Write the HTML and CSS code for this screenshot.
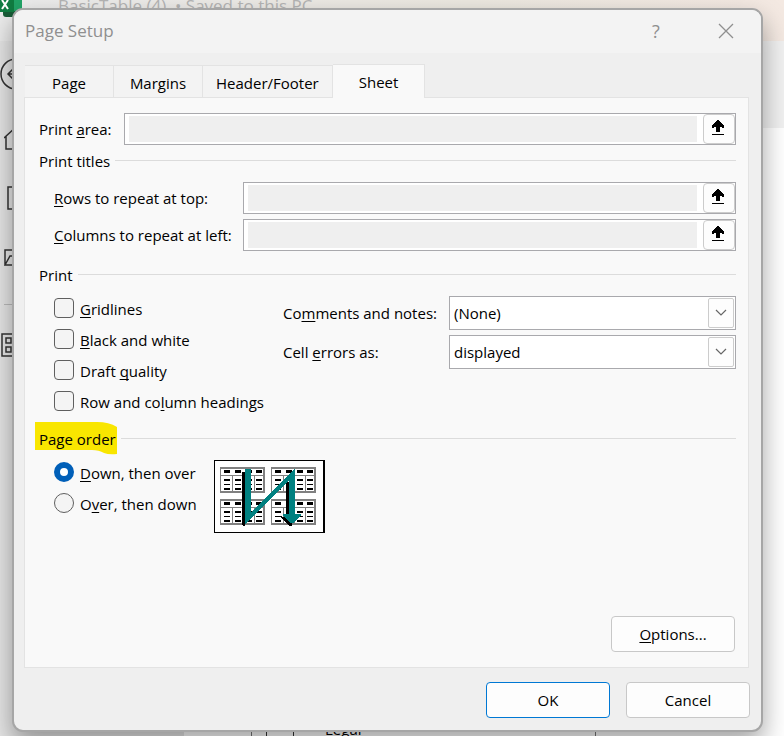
FILE: index.html
```html
<!DOCTYPE html>
<html lang="en">
<head>
    <meta charset="UTF-8">
    <meta name="viewport" content="width=device-width, initial-scale=1.0">
    <title>Page Setup</title>
    <link rel="stylesheet" href="styles.css">
</head>
<body>
    <!-- Excel window behind the dialog -->
    <div class="app">
        <header class="app-title">
            <svg class="logo" width="22" height="17" viewBox="0 0 22 17">
                <path d="M0 0h22v12H0z" fill="#21a366"/>
                <path d="M3 11h19v3q0 3-3 3H6q-3 0-3-3z" fill="#185c37"/>
                <path d="M0 0h14v12H0z" fill="#107c41"/>
                <path d="M2 0l6 9M8 0L2 9" stroke="#fff" stroke-width="2"/>
            </svg>
            <span>BasicTable (4) &nbsp;• Saved to this PC</span>
        </header>
        <div class="app-body">
            <nav class="sidebar">
                <svg class="back" width="32" height="32" viewBox="0 0 32 32"><circle cx="16" cy="16" r="15"/><path d="M24 16H8M14 10l-6 6 6 6"/></svg>
                <svg width="24" height="24" viewBox="0 0 24 24"><path d="M0 12L12 1l12 11M2 10v13h7v-8h6v8h7V10"/></svg>
                <svg width="24" height="24" viewBox="0 0 24 24"><path d="M4 1h10l6 6v16H4z"/></svg>
                <svg width="24" height="24" viewBox="0 0 24 24"><path d="M1 19V4h8l2 3h9v3M1 19l5-9h17l-4 9z"/></svg>
                <hr>
                <svg class="grid-icon" width="28" height="24" viewBox="0 0 28 24"><path d="M2 1h24v22H2zM6 5h5v5H6zM6 14h5v5H6zM16 5h5v5h-5zM16 14h5v5h-5z"/></svg>
            </nav>
            <main class="main">
                <div class="main-head"></div>
                <div class="list">
                    <div class="list-item"><span class="sheet-icon"></span>Legal</div>
                </div>
            </main>
        </div>
    </div>

    <!-- Page Setup dialog -->
    <form class="dialog">
        <div class="titlebar">
            <h1>Page Setup</h1>
            <button type="button" class="title-btn" aria-label="Help">?</button>
            <button type="button" class="title-btn" aria-label="Close">
                <svg width="16" height="16" viewBox="0 0 16 16"><path d="M1 1l14 14M15 1L1 15" stroke="#8f8f8f" stroke-width="1.3"/></svg>
            </button>
        </div>

        <div class="content">
            <div class="tabs">
                <button type="button" class="tab">Page</button>
                <button type="button" class="tab">Margins</button>
                <button type="button" class="tab">Header/Footer</button>
                <button type="button" class="tab active">Sheet</button>
            </div>

            <div class="panel">
                <div class="field">
                    <label class="area-label" for="area">Print <u>a</u>rea:</label>
                    <div class="range">
                        <input type="text" id="area">
                        <button type="button" class="pick" aria-label="Select print area"><svg width="12" height="16" viewBox="0 0 12 16"><path d="M5 0h2v1h1v1h1v1h1v1h1v1h1v3h-2V7H8v5H4V7H2v1H0V5h1V4h1V3h1V2h1V1h1zM0 14h12v1H0z"/></svg></button>
                    </div>
                </div>

                <fieldset class="titles">
                    <legend>Print titles</legend>
                    <div class="field indent">
                        <label class="title-label" for="rows"><u>R</u>ows to repeat at top:</label>
                        <div class="range">
                            <input type="text" id="rows">
                            <button type="button" class="pick" aria-label="Select rows"><svg width="12" height="16" viewBox="0 0 12 16"><path d="M5 0h2v1h1v1h1v1h1v1h1v1h1v3h-2V7H8v5H4V7H2v1H0V5h1V4h1V3h1V2h1V1h1zM0 14h12v1H0z"/></svg></button>
                        </div>
                    </div>
                    <div class="field indent">
                        <label class="title-label" for="cols"><u>C</u>olumns to repeat at left:</label>
                        <div class="range">
                            <input type="text" id="cols">
                            <button type="button" class="pick" aria-label="Select columns"><svg width="12" height="16" viewBox="0 0 12 16"><path d="M5 0h2v1h1v1h1v1h1v1h1v1h1v3h-2V7H8v5H4V7H2v1H0V5h1V4h1V3h1V2h1V1h1zM0 14h12v1H0z"/></svg></button>
                        </div>
                    </div>
                </fieldset>

                <fieldset class="print">
                    <legend>Print</legend>
                    <div class="print-cols">
                        <div class="checks">
                            <label class="option"><input type="checkbox"><span><u>G</u>ridlines</span></label>
                            <label class="option"><input type="checkbox"><span><u>B</u>lack and white</span></label>
                            <label class="option"><input type="checkbox"><span>Draft <u>q</u>uality</span></label>
                            <label class="option"><input type="checkbox"><span>Row and co<u>l</u>umn headings</span></label>
                        </div>
                        <div class="selects">
                            <div class="field">
                                <label class="select-label" for="comments">Co<u>m</u>ments and notes:</label>
                                <div class="select">
                                    <select id="comments"><option>(None)</option><option>At end of sheet</option></select>
                                    <span class="chevron"><svg width="12" height="8" viewBox="0 0 12 8"><path d="M1 1l5 5 5-5" fill="none" stroke="#666" stroke-width="1.2"/></svg></span>
                                </div>
                            </div>
                            <div class="field">
                                <label class="select-label" for="errors">Cell <u>e</u>rrors as:</label>
                                <div class="select">
                                    <select id="errors"><option>displayed</option><option>&lt;blank&gt;</option></select>
                                    <span class="chevron"><svg width="12" height="8" viewBox="0 0 12 8"><path d="M1 1l5 5 5-5" fill="none" stroke="#666" stroke-width="1.2"/></svg></span>
                                </div>
                            </div>
                        </div>
                    </div>
                </fieldset>

                <fieldset class="order">
                    <legend>
                        <span class="marked">
                            <svg class="marker" width="82" height="33" viewBox="0 0 82 33"><path d="M0 0h62q12 0 20 5v27q-8 1-13-1-5-3-12-3H0z" fill="#f9e600"/></svg>
                            <span class="marked-text">Page order</span>
                        </span>
                    </legend>
                    <div class="order-row">
                        <div>
                            <label class="option"><input type="radio" name="order" checked><span><u>D</u>own, then over</span></label>
                            <label class="option"><input type="radio" name="order"><span>O<u>v</u>er, then down</span></label>
                        </div>
                        <svg class="preview" width="111" height="73" viewBox="0 0 111 73" shape-rendering="crispEdges">
                            <defs>
                                <g id="sheet">
                                    <path d="M0 0h45v26H0z" fill="#808080"/>
                                    <path d="M1 2h42v6H1zM1 9h11v15H1zM13 9h10v15H13zM24 9h10v15H24zM35 9h8v15h-8z" fill="#fff"/>
                                    <path d="M4 3h6v3H4zM15 3h6v3h-6zM26 3h6v3h-6zM36 3h6v3h-6zM4 12h6v2H4zM15 12h6v2h-6zM26 12h6v2h-6zM36 12h6v2h-6zM4 17h6v1H4zM15 17h6v1h-6zM26 17h6v1h-6zM36 17h6v1h-6zM4 21h6v2H4zM15 21h6v2h-6zM26 21h6v2h-6zM36 21h6v2h-6z"/>
                                </g>
                            </defs>
                            <path d="M0 0h111v73H0z"/>
                            <path d="M1 1h108v71H1z" fill="#fff"/>
                            <use href="#sheet" x="6" y="7"/>
                            <use href="#sheet" x="57" y="7"/>
                            <use href="#sheet" x="6" y="39"/>
                            <use href="#sheet" x="57" y="39"/>
                            <path d="M28 12h3v54h-2v-1h-1zM72 22h3v38l3 4v2h-3l-6-6-3-3v-1l6 2z"/>
                            <path d="M31 9h6v43L80 9h1v45h6v1l-7 8h-3l-8-7v-2h6V21L31 64z" fill="#008080"/>
                        </svg>
                    </div>
                </fieldset>

                <button type="button" class="btn options"><u>O</u>ptions...</button>
            </div>

            <div class="footer">
                <button type="submit" class="btn primary">OK</button>
                <button type="button" class="btn">Cancel</button>
            </div>
        </div>
    </form>
</body>
</html>
```

FILE: styles.css
```css
* {
    box-sizing: border-box;
}
body {
    margin: 0;
    min-height: 100vh;
    position: relative;
    overflow: hidden;
    font-family: "Open Sans", "Noto Sans", sans-serif;
    font-size: 15px;
    line-height: 20px;
    color: #000;
}
button, input, select {
    font: inherit;
    color: inherit;
}
u {
    text-underline-offset: 2px;
    text-decoration-thickness: 1px;
    text-decoration-skip-ink: none;
}

/* window behind */
.app {
    height: 100vh;
    display: flex;
    flex-direction: column;
    overflow: hidden;
}
.app-title {
    display: flex;
    gap: 36px;
    height: 41px;
    background: linear-gradient(90deg, #ececec, #ece8e0 60%, #f4e9e2);
    color: #b4b4b4;
    font-size: 17px;
    line-height: 12px;
}
.app-body {
    flex: 1;
    display: flex;
    min-height: 0;
}
.sidebar {
    width: 184px;
    background: #e6e6e6;
    padding: 17px 0 0 4px;
    display: flex;
    flex-direction: column;
    align-items: flex-start;
    gap: 36px;
}
.sidebar svg {
    fill: none;
    stroke: #333;
    stroke-width: 1.5;
}
.sidebar .back {
    margin-left: -4px;
}
.sidebar .grid-icon {
    margin: -8px 0 0 -4px;
}
.sidebar hr {
    width: 160px;
    margin: -2px 0 0;
    border: 0;
    border-top: 1px solid #bbb;
}
.main {
    flex: 1;
    display: flex;
    flex-direction: column;
    background: #fff;
}
.main-head {
    height: 87px;
    background: #f1f1f1;
}
.list {
    flex: 1;
    display: flex;
    align-items: flex-end;
    width: 345px;
    margin-left: 67px;
    border: 1px solid #777;
    border-width: 0 1px;
}
.list-item {
    display: flex;
    gap: 31px;
    height: 17px;
    line-height: 20px;
}
.sheet-icon {
    width: 28px;
    margin-left: 14px;
    border: 1px solid #333;
    border-width: 0 1px;
}

/* dialog */
.dialog {
    position: absolute;
    top: 8px;
    left: 12px;
    right: 21px;
    border: 2px solid #a6a6a6;
    border-radius: 11px;
    background: #efefef;
    box-shadow: 0 12px 26px rgba(0, 0, 0, 0.36);
    overflow: hidden;
}
.titlebar {
    display: flex;
    align-items: center;
    height: 43px;
    padding: 0 12px 2px 11px;
    background: #f3f3f3;
    color: #8f8f8f;
}
.titlebar h1 {
    flex: 1;
    margin: 0;
    font-size: 17px;
    font-weight: normal;
}
.title-btn {
    display: flex;
    align-items: center;
    justify-content: center;
    width: 46px;
    height: 32px;
    margin-left: 24px;
    padding: 0;
    border: 0;
    background: none;
    font-size: 18px;
}
.content {
    padding: 11px 11px 12px 10px;
}
.tabs {
    display: flex;
    align-items: flex-end;
    padding-left: 1px;
}
.tab {
    min-width: 89px;
    height: 32px;
    padding: 2px 13px 0;
    border: 1px solid #e3e3e3;
    border-width: 1px 1px 0 0;
    background: #f3f3f3;
}
.tab.active {
    height: 34px;
    margin-bottom: -1px;
    padding: 0 26px;
    background: #f9f9f9;
    position: relative;
}
.panel {
    display: flex;
    flex-direction: column;
    min-height: 571px;
    margin-right: 1px;
    padding: 15px 12px 15px 14px;
    border: 1px solid #e3e3e3;
    background: #f9f9f9;
}
.field {
    display: flex;
    align-items: center;
}
.indent {
    padding-left: 15px;
}
.area-label {
    width: 85px;
}
.title-label {
    width: 189px;
}
.select-label {
    width: 166px;
}
.range {
    flex: 1;
    display: flex;
    align-items: center;
    gap: 6px;
    height: 32px;
    padding-left: 4px;
    border: 1px solid #a9a9ad;
    background: #fff;
}
.range input {
    flex: 1;
    min-width: 0;
    height: 26px;
    padding: 0 4px;
    border: 0;
    background: #efefef;
}
.pick {
    width: 32px;
    height: 30px;
    padding: 0 2px 2px 0;
    border: 1px solid #ccc;
    border-radius: 4px;
    background: #fdfdfd;
    display: flex;
    align-items: center;
    justify-content: center;
}
fieldset {
    min-width: 0;
    margin: 0;
    padding: 0;
    border: 0;
}
legend {
    display: flex;
    align-items: center;
    gap: 5px;
    width: 100%;
    padding: 0;
}
legend::after {
    content: "";
    flex: 1;
    height: 1px;
    margin-bottom: 2px;
    background: #dcdcdc;
}
.titles {
    margin-top: 6px;
}
.titles legend {
    margin-bottom: 11px;
}
.titles .field + .field {
    margin-top: 5px;
}
.print {
    margin-top: 14px;
}
.print legend {
    margin-bottom: 8px;
}
.print-cols {
    display: flex;
    padding-left: 15px;
}
.checks {
    width: 229px;
}
.option {
    display: flex;
    align-items: center;
    gap: 6px;
    height: 31px;
}
.option input {
    appearance: none;
    width: 20px;
    height: 20px;
    margin: 0 0 2px;
    border: 1px solid #5f5f5f;
    border-radius: 4px;
    background: #f4f4f4;
}
.option input[type="radio"] {
    border-radius: 50%;
}
.option input[type="radio"]:checked {
    border: 6px solid #005fb8;
    background: #fff;
}
.selects {
    flex: 1;
    display: flex;
    flex-direction: column;
    gap: 5px;
    padding-top: 3px;
}
.select {
    flex: 1;
    position: relative;
}
.select select {
    appearance: none;
    display: block;
    width: 100%;
    height: 34px;
    padding: 0 30px 0 4px;
    border: 1px solid #a9a9ad;
    border-radius: 0;
    background: #fff;
}
.chevron {
    position: absolute;
    top: 2px;
    right: 2px;
    bottom: 2px;
    width: 26px;
    display: flex;
    align-items: center;
    justify-content: center;
    border: 1px solid #ccc;
    border-radius: 2px;
    background: #fdfdfd;
    pointer-events: none;
}
.order {
    margin-top: 12px;
}
.order legend {
    margin-bottom: 8px;
}
.marked {
    position: relative;
}
.marker {
    position: absolute;
    top: -7px;
    left: -4px;
}
.marked-text {
    position: relative;
}
.order-row {
    display: flex;
    gap: 17px;
    padding-left: 15px;
}
.preview {
    margin-top: 3px;
}
.btn {
    width: 124px;
    height: 36px;
    padding: 0;
    border: 1px solid #c8c8c8;
    border-radius: 4px;
    background: #fdfdfd;
}
.primary {
    border-color: #0078d4;
}
.options {
    margin: auto 1px 0 auto;
}
.footer {
    display: flex;
    justify-content: flex-end;
    gap: 16px;
    margin-top: 14px;
}
```
